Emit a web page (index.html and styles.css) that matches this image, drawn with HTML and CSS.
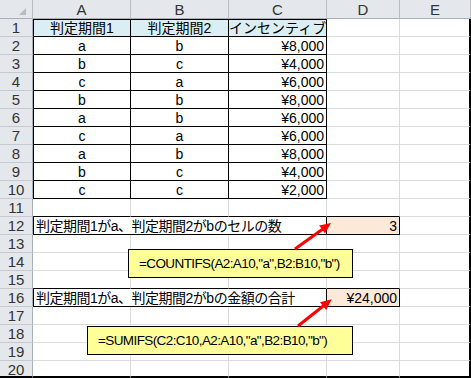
FILE: index.html
```html
<!DOCTYPE html>
<html lang="ja">
<head>
<meta charset="utf-8">
<link rel="stylesheet" href="styles.css">
</head>
<body>
<div class="sheet">
  <div class="grid">
    <div class="h corner"><span class="tri"></span></div>
    <div class="h">A</div><div class="h">B</div><div class="h">C</div><div class="h">D</div><div class="h">E</div>

    <div class="r">1</div>
    <div class="c t ta top blue ctr">判定期間1</div><div class="c t top blue ctr">判定期間2</div><div class="c t top blue ctr">インセンティブ</div><div class="c"></div><div class="c e"></div>

    <div class="r">2</div><div class="c t ta ctr">a</div><div class="c t ctr">b</div><div class="c t num">¥8,000</div><div class="c"></div><div class="c e"></div>
    <div class="r">3</div><div class="c t ta ctr">b</div><div class="c t ctr">c</div><div class="c t num">¥4,000</div><div class="c"></div><div class="c e"></div>
    <div class="r">4</div><div class="c t ta ctr">c</div><div class="c t ctr">a</div><div class="c t num">¥6,000</div><div class="c"></div><div class="c e"></div>
    <div class="r">5</div><div class="c t ta ctr">b</div><div class="c t ctr">b</div><div class="c t num">¥8,000</div><div class="c"></div><div class="c e"></div>
    <div class="r">6</div><div class="c t ta ctr">a</div><div class="c t ctr">b</div><div class="c t num">¥6,000</div><div class="c"></div><div class="c e"></div>
    <div class="r">7</div><div class="c t ta ctr">c</div><div class="c t ctr">a</div><div class="c t num">¥6,000</div><div class="c"></div><div class="c e"></div>
    <div class="r">8</div><div class="c t ta ctr">a</div><div class="c t ctr">b</div><div class="c t num">¥8,000</div><div class="c"></div><div class="c e"></div>
    <div class="r">9</div><div class="c t ta ctr">b</div><div class="c t ctr">c</div><div class="c t num">¥4,000</div><div class="c"></div><div class="c e"></div>
    <div class="r">10</div><div class="c t ta ctr">c</div><div class="c t ctr">c</div><div class="c t num">¥2,000</div><div class="c"></div><div class="c e"></div>

    <div class="r">11</div><div class="c bb"></div><div class="c bb"></div><div class="c bb"></div><div class="c bb"></div><div class="c e"></div>

    <div class="r">12</div><div class="c t ta span3 lbl">判定期間1がa、判定期間2がbのセルの数</div><div class="c t orange num">3</div><div class="c e"></div>

    <div class="r">13</div><div class="c"></div><div class="c"></div><div class="c"></div><div class="c"></div><div class="c e"></div>
    <div class="r">14</div><div class="c"></div><div class="c"></div><div class="c"></div><div class="c"></div><div class="c e"></div>
    <div class="r">15</div><div class="c bb"></div><div class="c bb"></div><div class="c bb"></div><div class="c bb"></div><div class="c e"></div>

    <div class="r">16</div><div class="c t ta span3 lbl">判定期間1がa、判定期間2がbの金額の合計</div><div class="c t orange num">¥24,000</div><div class="c e"></div>

    <div class="r">17</div><div class="c"></div><div class="c"></div><div class="c"></div><div class="c"></div><div class="c e"></div>
    <div class="r">18</div><div class="c"></div><div class="c"></div><div class="c"></div><div class="c"></div><div class="c e"></div>
    <div class="r">19</div><div class="c"></div><div class="c"></div><div class="c"></div><div class="c"></div><div class="c e"></div>
    <div class="r last">20</div><div class="c last"></div><div class="c last"></div><div class="c last"></div><div class="c last"></div><div class="c e last"></div>
  </div>

  <div class="callout callout-count">=COUNTIFS(A2:A10,"a",B2:B10,"b")</div>
  <div class="callout callout-sum">=SUMIFS(C2:C10,A2:A10,"a",B2:B10,"b")</div>

  <svg class="arrows" width="471" height="378" viewBox="0 0 471 378">
    <line x1="295" y1="249" x2="322.5" y2="229.2" stroke="#ff0000" stroke-width="3"/>
    <polygon points="331,223 325,233.5 319.2,225.4" fill="#ff0000"/>
    <line x1="298" y1="326" x2="323.5" y2="305.8" stroke="#ff0000" stroke-width="3"/>
    <polygon points="331.7,299.3 326.2,310 320,302.2" fill="#ff0000"/>
  </svg>
</div>
</body>
</html>
```

FILE: styles.css
```css
* { box-sizing: border-box; }
html, body { margin: 0; padding: 0; background: #fff; }
body { width: 471px; height: 378px; overflow: hidden; }

.sheet {
  position: relative;
  width: 471px;
  height: 378px;
  font-family: "Liberation Sans", "Noto Sans CJK JP", sans-serif;
  font-size: 14px;
  color: #000;
}

.grid {
  display: grid;
  grid-template-columns: 33px 98px 98px 98px 73px 71px;
  grid-template-rows: 19px repeat(19, 18px) 17px;
}

.h {
  background: #e4e7eb;
  border-right: 1px solid #b9bec4;
  border-bottom: 1px solid #a9b0b8;
  color: #333;
  font-size: 15px;
  text-align: center;
  line-height: 19px;
}
.h:last-child { border-right: 2px solid #000; }
.corner { position: relative; }
.tri {
  position: absolute;
  right: 6px;
  bottom: 3px;
  width: 0;
  height: 0;
  border-left: 7px solid transparent;
  border-bottom: 7px solid #b8bcc1;
}

.r {
  background: #e4e7eb;
  border-right: 1px solid #a9b0b8;
  border-bottom: 1px solid #c6cad0;
  color: #333;
  font-size: 15px;
  text-align: center;
  line-height: 18px;
}

.c {
  border-right: 1px solid #d9dbde;
  border-bottom: 1px solid #d9dbde;
  line-height: 18px;
  white-space: nowrap;
  overflow: visible;
}
.c.e { border-right: 2px solid #000; }
.last { border-bottom: 2px solid #000 !important; }

.t { border-right-color: #000; border-bottom-color: #000; }
.ta { border-left: 1px solid #000; }
.top { border-top: 1px solid #000; line-height: 16px; }
.bb { border-bottom-color: #000; }

.blue { background: #daeef3; }
.orange { background: #fde9d9; }

.ctr { text-align: center; }
.num { text-align: right; padding-right: 2px; }
.span3 { grid-column: span 3; }
.lbl { padding-left: 2px; letter-spacing: -0.5px; }

.callout {
  position: absolute;
  left: 128px;
  width: 225px;
  height: 29px;
  background: #ffff99;
  border: 1px solid #000;
  font-size: 13.5px;
  letter-spacing: -0.6px;
  line-height: 27px;
  white-space: nowrap;
}
.callout-count { top: 249px; padding-left: 10px; }
.callout-sum { top: 326px; left: 87px; width: 266px; padding-left: 10px; }

.arrows { position: absolute; left: 0; top: 0; pointer-events: none; }
```
